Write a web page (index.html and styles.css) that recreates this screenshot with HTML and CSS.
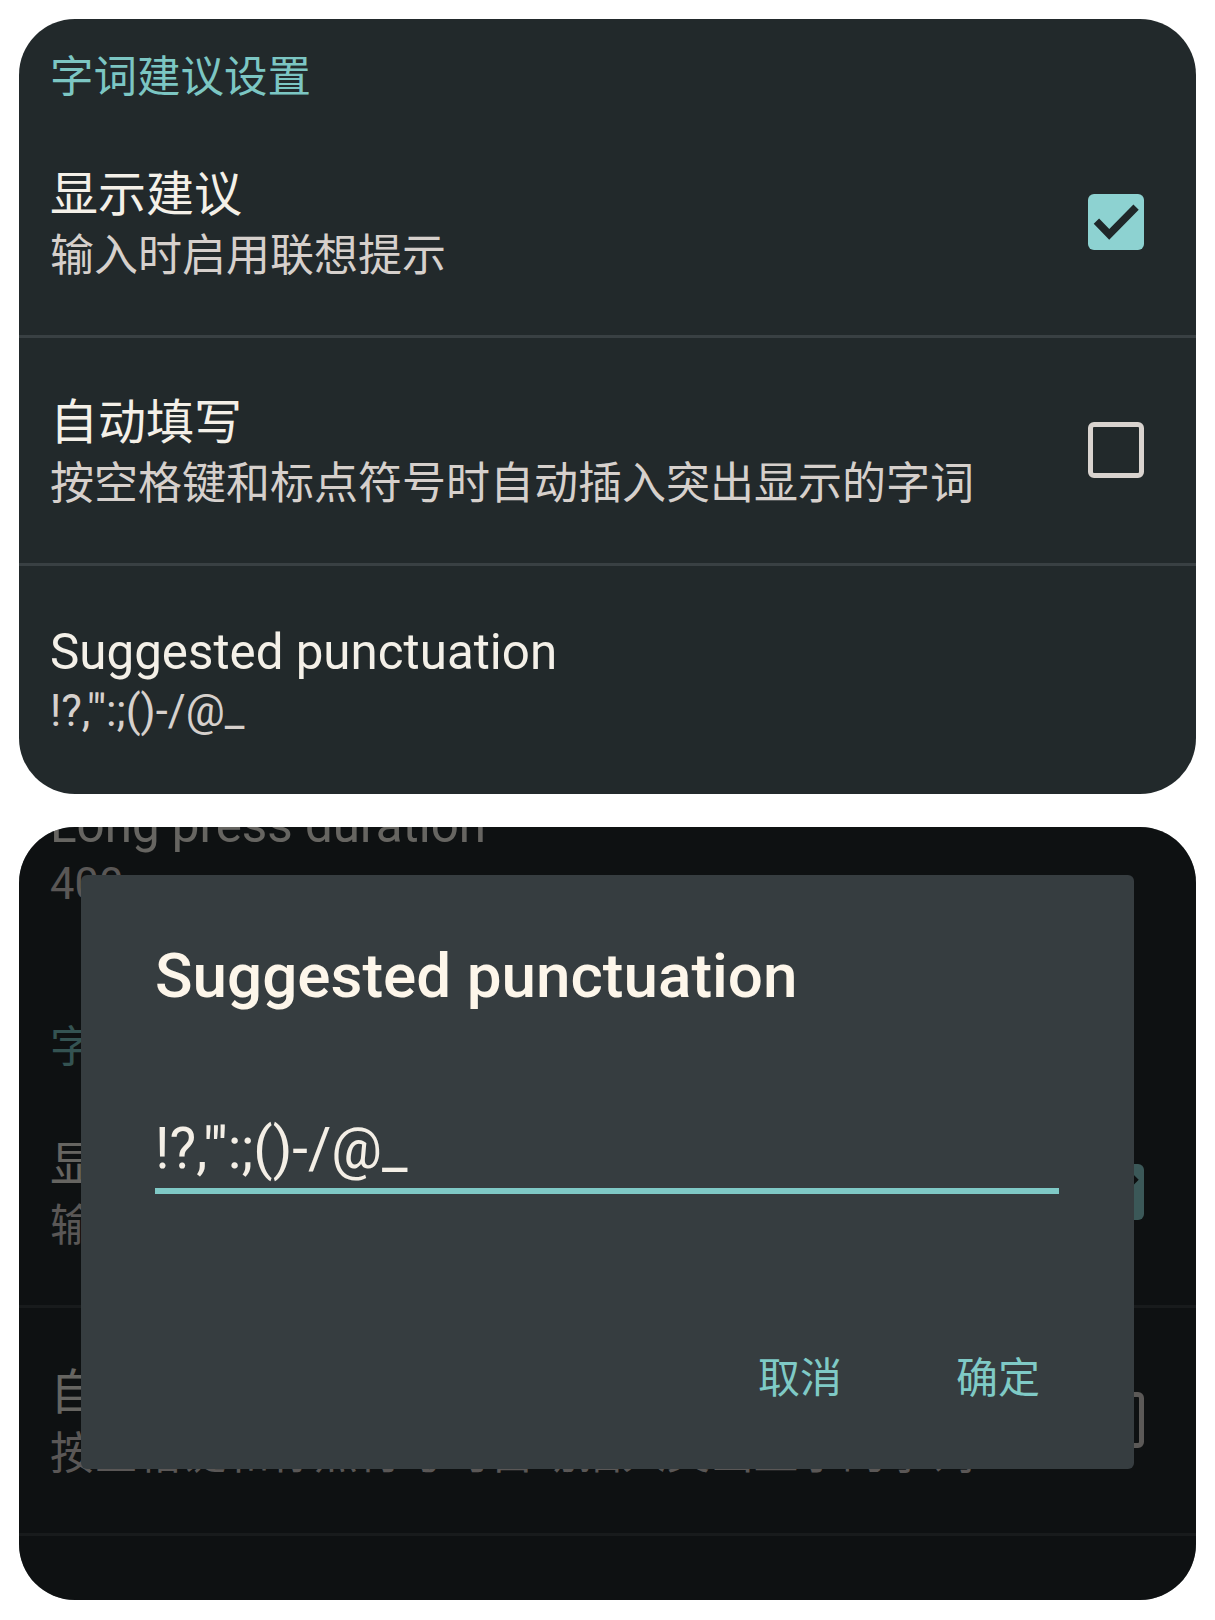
FILE: index.html
```html
<!DOCTYPE html>
<html lang="zh-CN">
<head>
<meta charset="utf-8">
<title>字词建议设置</title>
<link rel="stylesheet" href="styles.css">
</head>
<body>
<main class="page">
  <section class="card">
    <div class="prefs">
      <div class="cat-header">字词建议设置</div>
      <div class="pref">
        <div class="pref-text">
          <div class="pref-title">显示建议</div>
          <div class="pref-sub">输入时启用联想提示</div>
        </div>
        <span class="check check--on"><svg viewBox="0 0 24 24"><polyline points="3.6,11.6 9.1,17.3 20.6,5.6"/></svg></span>
      </div>
      <div class="divider"></div>
      <div class="pref">
        <div class="pref-text">
          <div class="pref-title">自动填写</div>
          <div class="pref-sub">按空格键和标点符号时自动插入突出显示的字词</div>
        </div>
        <span class="check"></span>
      </div>
      <div class="divider"></div>
      <div class="pref pref--latin">
        <div class="pref-text">
          <div class="pref-title">Suggested punctuation</div>
          <div class="pref-sub">!?,"':;()-/@_</div>
        </div>
      </div>
    </div>
  </section>

  <section class="card card--modal">
    <div class="prefs prefs--behind">
      <div class="pref pref--latin">
        <div class="pref-text">
          <div class="pref-title">Long press duration</div>
          <div class="pref-sub">400</div>
        </div>
      </div>
      <div class="cat-header cat-header--spaced">字词建议设置</div>
      <div class="pref">
        <div class="pref-text">
          <div class="pref-title">显示建议</div>
          <div class="pref-sub">输入时启用联想提示</div>
        </div>
        <span class="check check--on"><svg viewBox="0 0 24 24"><polyline points="3.6,11.6 9.1,17.3 20.6,5.6"/></svg></span>
      </div>
      <div class="divider"></div>
      <div class="pref">
        <div class="pref-text">
          <div class="pref-title">自动填写</div>
          <div class="pref-sub">按空格键和标点符号时自动插入突出显示的字词</div>
        </div>
        <span class="check"></span>
      </div>
      <div class="divider"></div>
      <div class="pref pref--latin">
        <div class="pref-text">
          <div class="pref-title">Suggested punctuation</div>
          <div class="pref-sub">!?,"':;()-/@_</div>
        </div>
      </div>
    </div>
    <div class="scrim"></div>
    <div class="dialog">
      <div class="dialog-title">Suggested punctuation</div>
      <div class="dialog-input">!?,"':;()-/@_</div>
      <div class="dialog-actions">
        <span class="dialog-btn">取消</span>
        <span class="dialog-btn">确定</span>
      </div>
    </div>
  </section>
</main>
</body>
</html>
```

FILE: styles.css
```css
* {
  box-sizing: border-box;
  margin: 0;
  padding: 0;
}

html,
body {
  background: #ffffff;
}

body {
  width: 1215px;
  height: 1620px;
  overflow: hidden;
  font-family: Roboto, "Noto Sans CJK SC", sans-serif;
}

.page {
  padding: 19px;
  display: flex;
  flex-direction: column;
  gap: 33px;
}

.card {
  width: 1177px;
  border-radius: 56px;
  background: #22292b;
  overflow: hidden;
}

.card--modal {
  position: relative;
  height: 773px;
}

.prefs--behind {
  margin-top: -88px;
}

.cat-header {
  padding: 29px 31px 10px;
  font-family: "Noto Sans CJK SC", sans-serif;
  font-size: 43.5px;
  line-height: 52px;
  color: #7cc6c3;
}

.cat-header--spaced {
  margin-top: 22px;
}

.pref {
  display: flex;
  align-items: center;
  justify-content: space-between;
  padding: 50px 52px 51px 31px;
}

.pref-title {
  font-family: "Noto Sans CJK SC", sans-serif;
  font-size: 48px;
  line-height: 60px;
  color: #f4f0e8;
}

.pref-sub {
  font-family: "Noto Sans CJK SC", sans-serif;
  font-size: 44px;
  line-height: 64px;
  color: #d6d0cc;
}

.pref--latin {
  padding-top: 57px;
}

.pref--latin .pref-title {
  font-family: Roboto, sans-serif;
  font-size: 49.3px;
  line-height: 58px;
}

.pref--latin .pref-sub {
  font-family: Roboto, sans-serif;
  font-size: 43.5px;
  line-height: 62px;
}

.divider {
  height: 3px;
  background: #394043;
}

.check {
  flex: none;
  display: flex;
  width: 56px;
  height: 56px;
  border: 5px solid #d9d3cf;
  border-radius: 6px;
}

.check--on {
  border: 0;
  background: #8dd2d1;
}

.check svg {
  width: 100%;
  height: 100%;
  fill: none;
  stroke: #1f2729;
  stroke-width: 3.2;
  stroke-linecap: butt;
  stroke-linejoin: miter;
}

.scrim {
  position: absolute;
  inset: 0;
  background: rgba(0, 0, 0, 0.58);
}

.dialog {
  position: absolute;
  left: 62px;
  top: 48px;
  width: 1053px;
  height: 594px;
  padding: 66px 75px 0 74px;
  display: flex;
  flex-direction: column;
  background: #363d40;
  border-radius: 6px;
}

.dialog-title {
  font-family: Roboto, sans-serif;
  font-size: 62px;
  font-weight: 500;
  line-height: 70px;
  color: #fdf6ea;
}

.dialog-input {
  margin-top: 106px;
  padding-bottom: 7px;
  border-bottom: 6px solid #7fc9c6;
  font-family: Roboto, sans-serif;
  font-size: 56.5px;
  line-height: 64px;
  color: #f4efe6;
}

.dialog-actions {
  margin-top: 153px;
  display: flex;
  justify-content: flex-end;
  gap: 76px;
}

.dialog-btn {
  padding: 0 19px;
  font-family: "Noto Sans CJK SC", sans-serif;
  font-size: 42px;
  line-height: 56px;
  color: #7fcac6;
}
```
